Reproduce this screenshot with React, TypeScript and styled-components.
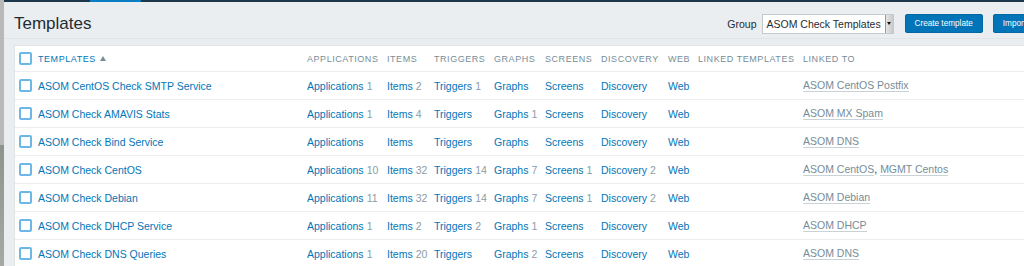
import React from 'react';
import styled, { createGlobalStyle } from 'styled-components';

const GlobalStyle = createGlobalStyle`
  html, body {
    margin: 0;
    padding: 0;
    background: #ebeef0;
    overflow: hidden;
  }
  body {
    font-family: "Liberation Sans", Arial, sans-serif;
    color: #1f2c33;
  }
`;

const Screen = styled.div`
  display: flex;
  width: 1060px;
  min-height: 266px;
`;

const SideStrip = styled.div`
  width: 4px;
  flex-shrink: 0;
  background: linear-gradient(to bottom, #b9b9b9 0, #b9b9b9 145px, #8e938c 145px, #a7aaa4 100%);
`;

const Main = styled.div`
  flex: 1;
  display: flex;
  flex-direction: column;
  & > * {
    flex-shrink: 0;
  }
`;

const TopBar = styled.div`
  height: 2px;
  background: #1c3749;
  display: flex;
  padding-left: 86px;
`;

const TopTab = styled.div`
  width: 51px;
  background: #0a7ec2;
`;

const Header = styled.header`
  height: 29px;
  padding: 7px 24px 0 10px;
  margin-bottom: 6px;
  border-bottom: 1px solid #dfe4e7;
  display: flex;
  align-items: center;
`;

const Title = styled.h1`
  margin: 0;
  font-size: 17px;
  font-weight: normal;
  color: #1f2c33;
`;

const Controls = styled.div`
  margin-left: auto;
  display: flex;
  align-items: center;
`;

const Label = styled.span`
  font-size: 10.5px;
  color: #1f2c33;
  margin-right: 5px;
`;

const Select = styled.div`
  width: 126px;
  height: 18px;
  border: 1px solid #c4c9cc;
  background: #fff;
  display: flex;
  align-items: center;
  font-size: 10.5px;
  color: #1f2c33;
  padding-left: 4px;
  box-sizing: content-box;
  margin-right: 11px;
`;

const SelectText = styled.span`
  flex: 1;
`;

const SelectArrow = styled.span`
  width: 7px;
  height: 18px;
  background: linear-gradient(to right, #e4e4e4, #c9c9c9);
  border-left: 1px solid #9a9a9a;
  display: flex;
  align-items: center;
  justify-content: center;
  &::after {
    content: '';
    border-left: 2px solid transparent;
    border-right: 2px solid transparent;
    border-top: 3px solid #111;
  }
`;

const Button = styled.button<{ $gap?: number }>`
  height: 19px;
  padding: 0 9px;
  margin-right: ${({ $gap }) => $gap ?? 0}px;
  border: 1px solid #0268a3;
  border-radius: 2px;
  background: #0275b8;
  color: #fff;
  font-family: "Liberation Sans", Arial, sans-serif;
  font-size: 8.2px;
  white-space: nowrap;
`;

const Card = styled.div`
  background: #fff;
  border: 1px solid #dfe4e7;
  border-right: none;
  margin-left: 10px;
`;

const Row = styled.div<{ $head?: boolean }>`
  display: grid;
  grid-template-columns: 23px 269px 80px 47px 60px 51px 56px 67px 30px 105px 1fr;
  align-items: center;
  height: ${({ $head }) => ($head ? 25 : 27)}px;
  border-bottom: 1px solid #ebeef0;
  font-size: 10.5px;
  white-space: nowrap;
`;

const Cell = styled.div`
  overflow: hidden;
`;

const HeadCell = styled.div<{ $active?: boolean }>`
  font-size: 9px;
  letter-spacing: 0.55px;
  text-transform: uppercase;
  color: ${({ $active }) => ($active ? '#0275b8' : '#768d99')};
  display: flex;
  align-items: center;
`;

const SortArrow = styled.span`
  margin-left: 4px;
  border-left: 3px solid transparent;
  border-right: 3px solid transparent;
  border-bottom: 5px solid #768d99;
`;

const CheckCell = styled.div`
  padding-left: 4px;
  display: flex;
  align-items: center;
`;

const Checkbox = styled.span`
  width: 9px;
  height: 9px;
  border: 2px solid #6db7e8;
  border-radius: 2px;
  background: #fff;
`;

const Link = styled.a`
  color: #0275b8;
  text-decoration: none;
`;

const Count = styled.sup`
  vertical-align: baseline;
  font-size: 10.5px;
  color: #8a9da6;
  margin-left: 3px;
`;

const AltLink = styled.a`
  display: inline-block;
  line-height: 12px;
  color: #768d99;
  text-decoration: none;
  border-bottom: 1px solid #c9d2d6;
`;

const Sep = styled.span`
  color: #1f2c33;
  margin-right: 3px;
`;

type Tpl = {
  name: string;
  apps?: number;
  items?: number;
  triggers?: number;
  graphs?: number;
  screens?: number;
  discovery?: number;
  linked: string[];
};

const templates: Tpl[] = [
  { name: 'ASOM CentOS Check SMTP Service', apps: 1, items: 2, triggers: 1, linked: ['ASOM CentOS Postfix'] },
  { name: 'ASOM Check AMAVIS Stats', apps: 1, items: 4, graphs: 1, linked: ['ASOM MX Spam'] },
  { name: 'ASOM Check Bind Service', linked: ['ASOM DNS'] },
  { name: 'ASOM Check CentOS', apps: 10, items: 32, triggers: 14, graphs: 7, screens: 1, discovery: 2, linked: ['ASOM CentOS', 'MGMT Centos'] },
  { name: 'ASOM Check Debian', apps: 11, items: 32, triggers: 14, graphs: 7, screens: 1, discovery: 2, linked: ['ASOM Debian'] },
  { name: 'ASOM Check DHCP Service', apps: 1, items: 2, triggers: 2, graphs: 1, linked: ['ASOM DHCP'] },
  { name: 'ASOM Check DNS Queries', apps: 1, items: 20, graphs: 2, linked: ['ASOM DNS'] },
];

const heads = ['Applications', 'Items', 'Triggers', 'Graphs', 'Screens', 'Discovery', 'Web', 'Linked templates', 'Linked to'];

const Counted: React.FC<{ label: string; n?: number }> = ({ label, n }) => (
  <Cell>
    <Link href="#">{label}</Link>
    {n !== undefined && <Count>{n}</Count>}
  </Cell>
);

export default function App() {
  return (
    <>
      <GlobalStyle />
      <Screen>
        <SideStrip />
        <Main>
          <TopBar>
            <TopTab />
          </TopBar>
          <Header>
            <Title>Templates</Title>
            <Controls>
              <Label>Group</Label>
              <Select>
                <SelectText>ASOM Check Templates</SelectText>
                <SelectArrow />
              </Select>
              <Button $gap={10}>Create template</Button>
              <Button>Import</Button>
            </Controls>
          </Header>
          <Card>
            <Row $head>
              <CheckCell>
                <Checkbox />
              </CheckCell>
              <HeadCell $active>
                Templates
                <SortArrow />
              </HeadCell>
              {heads.map((h) => (
                <HeadCell key={h}>{h}</HeadCell>
              ))}
            </Row>
            {templates.map((t) => (
              <Row key={t.name}>
                <CheckCell>
                  <Checkbox />
                </CheckCell>
                <Cell>
                  <Link href="#">{t.name}</Link>
                </Cell>
                <Counted label="Applications" n={t.apps} />
                <Counted label="Items" n={t.items} />
                <Counted label="Triggers" n={t.triggers} />
                <Counted label="Graphs" n={t.graphs} />
                <Counted label="Screens" n={t.screens} />
                <Counted label="Discovery" n={t.discovery} />
                <Counted label="Web" />
                <Cell />
                <Cell>
                  {t.linked.map((l, i) => (
                    <React.Fragment key={l}>
                      {i > 0 && <Sep>,</Sep>}
                      <AltLink href="#">{l}</AltLink>
                    </React.Fragment>
                  ))}
                </Cell>
              </Row>
            ))}
          </Card>
        </Main>
      </Screen>
    </>
  );
}
